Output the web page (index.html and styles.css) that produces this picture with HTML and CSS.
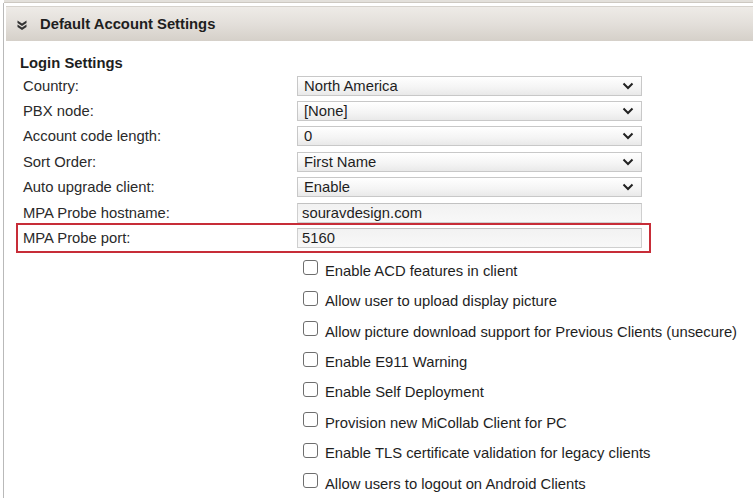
FILE: index.html
```html
<!DOCTYPE html>
<html>
<head>
<meta charset="utf-8">
<link rel="stylesheet" href="styles.css">
</head>
<body>
<div class="topstrip"></div>
<div class="panel">
  <div class="header">
    <svg class="hicon" width="10" height="10" viewBox="0 0 10 10"><path d="M0.5 0.5 L5 3.5 L9.5 0.5 L9.5 3 L5 6 L0.5 3 Z M0.5 4.5 L5 7.5 L9.5 4.5 L9.5 7 L5 10 L0.5 7 Z" fill="#333"/></svg>
    <span class="htitle">Default Account Settings</span>
  </div>
  <div class="body">
    <div class="section-title">Login Settings</div>
    <div class="rows">
      <div class="row"><div class="label">Country:</div><div class="select"><span>North America</span><svg class="chev" width="12" height="8" viewBox="0 0 12 8"><path d="M1.5 1.5 L6 6 L10.5 1.5" fill="none" stroke="#222" stroke-width="2"/></svg></div></div>
      <div class="row"><div class="label">PBX node:</div><div class="select"><span>[None]</span><svg class="chev" width="12" height="8" viewBox="0 0 12 8"><path d="M1.5 1.5 L6 6 L10.5 1.5" fill="none" stroke="#222" stroke-width="2"/></svg></div></div>
      <div class="row"><div class="label">Account code length:</div><div class="select"><span>0</span><svg class="chev" width="12" height="8" viewBox="0 0 12 8"><path d="M1.5 1.5 L6 6 L10.5 1.5" fill="none" stroke="#222" stroke-width="2"/></svg></div></div>
      <div class="row"><div class="label">Sort Order:</div><div class="select"><span>First Name</span><svg class="chev" width="12" height="8" viewBox="0 0 12 8"><path d="M1.5 1.5 L6 6 L10.5 1.5" fill="none" stroke="#222" stroke-width="2"/></svg></div></div>
      <div class="row"><div class="label">Auto upgrade client:</div><div class="select"><span>Enable</span><svg class="chev" width="12" height="8" viewBox="0 0 12 8"><path d="M1.5 1.5 L6 6 L10.5 1.5" fill="none" stroke="#222" stroke-width="2"/></svg></div></div>
      <div class="row"><div class="label">MPA Probe hostname:</div><div class="input">souravdesign.com</div></div>
      <div class="row highlight"><div class="label">MPA Probe port:</div><div class="input">5160</div></div>
    </div>
    <div class="checks">
      <div class="check"><span class="box"></span><span>Enable ACD features in client</span></div>
      <div class="check"><span class="box"></span><span>Allow user to upload display picture</span></div>
      <div class="check"><span class="box"></span><span>Allow picture download support for Previous Clients (unsecure)</span></div>
      <div class="check"><span class="box"></span><span>Enable E911 Warning</span></div>
      <div class="check"><span class="box"></span><span>Enable Self Deployment</span></div>
      <div class="check"><span class="box"></span><span>Provision new MiCollab Client for PC</span></div>
      <div class="check"><span class="box"></span><span>Enable TLS certificate validation for legacy clients</span></div>
      <div class="check"><span class="box"></span><span>Allow users to logout on Android Clients</span></div>
    </div>
  </div>
</div>
</body>
</html>
```
FILE: styles.css
```css
html, body {
  margin: 0;
  padding: 0;
  background: #ffffff;
  font-family: "Liberation Sans", Arial, sans-serif;
  font-size: 14.8px;
  color: #262626;
  overflow: hidden;
}
.topstrip {
  height: 2px;
  background: #e3e0db;
  border-bottom: 1px solid #cdc8c1;
  margin-left: 4px;
}
.panel {
  margin-left: 3px;
  border-left: 1px solid #b9b9b9;
  padding-left: 2px;
  padding-top: 3px;
  height: 495px;
  box-sizing: border-box;
}
.header {
  height: 35px;
  box-sizing: border-box;
  border-top: 1px solid #d6d2cc;
  background: linear-gradient(to bottom, #eeebe7 0%, #e3dfda 50%, #d5d0c9 100%);
  display: flex;
  align-items: center;
  padding-left: 11px;
}
.hicon {
  margin-right: 13px;
  margin-top: 1px;
}
.htitle {
  font-weight: bold;
  color: #1e1e1e;
}
.body {
  padding-top: 13px;
}
.section-title {
  font-weight: bold;
  color: #1e1e1e;
  line-height: 18px;
  padding-left: 14px;
  margin-bottom: 1px;
}
.rows {
  margin-left: 12px;
  width: 631px;
}
.row {
  display: grid;
  grid-template-columns: 279px 345px;
  height: 25.4px;
  align-items: center;
}
.label {
  padding-left: 5px;
  color: #2a2a2a;
}
.select {
  height: 20px;
  box-sizing: border-box;
  border: 1px solid #c8c8c8;
  background: linear-gradient(to bottom, #ffffff 0%, #f4f4f4 60%, #e9e9e9 100%);
  display: flex;
  align-items: center;
  justify-content: space-between;
  padding-left: 6px;
  padding-right: 7px;
  color: #1e1e1e;
}
.input {
  height: 20px;
  box-sizing: border-box;
  border: 1px solid #cfcfcf;
  border-top-color: #c2c2c2;
  background: linear-gradient(to bottom, #f2f2f2 0%, #f8f8f8 100%);
  display: flex;
  align-items: center;
  padding-left: 4px;
  color: #1e1e1e;
}
.highlight {
  outline: 2.5px solid #c72d38;
}
.checks {
  margin-top: 5px;
  padding-left: 291px;
}
.check {
  height: 30.4px;
  display: flex;
  align-items: center;
  color: #1e1e1e;
  white-space: nowrap;
}
.box {
  width: 15px;
  height: 15px;
  box-sizing: border-box;
  border: 1.5px solid #6e6e6e;
  border-radius: 3px;
  background: #fff;
  margin-left: 6px;
  margin-right: 7px;
  margin-bottom: 6px;
  flex: none;
}
```
